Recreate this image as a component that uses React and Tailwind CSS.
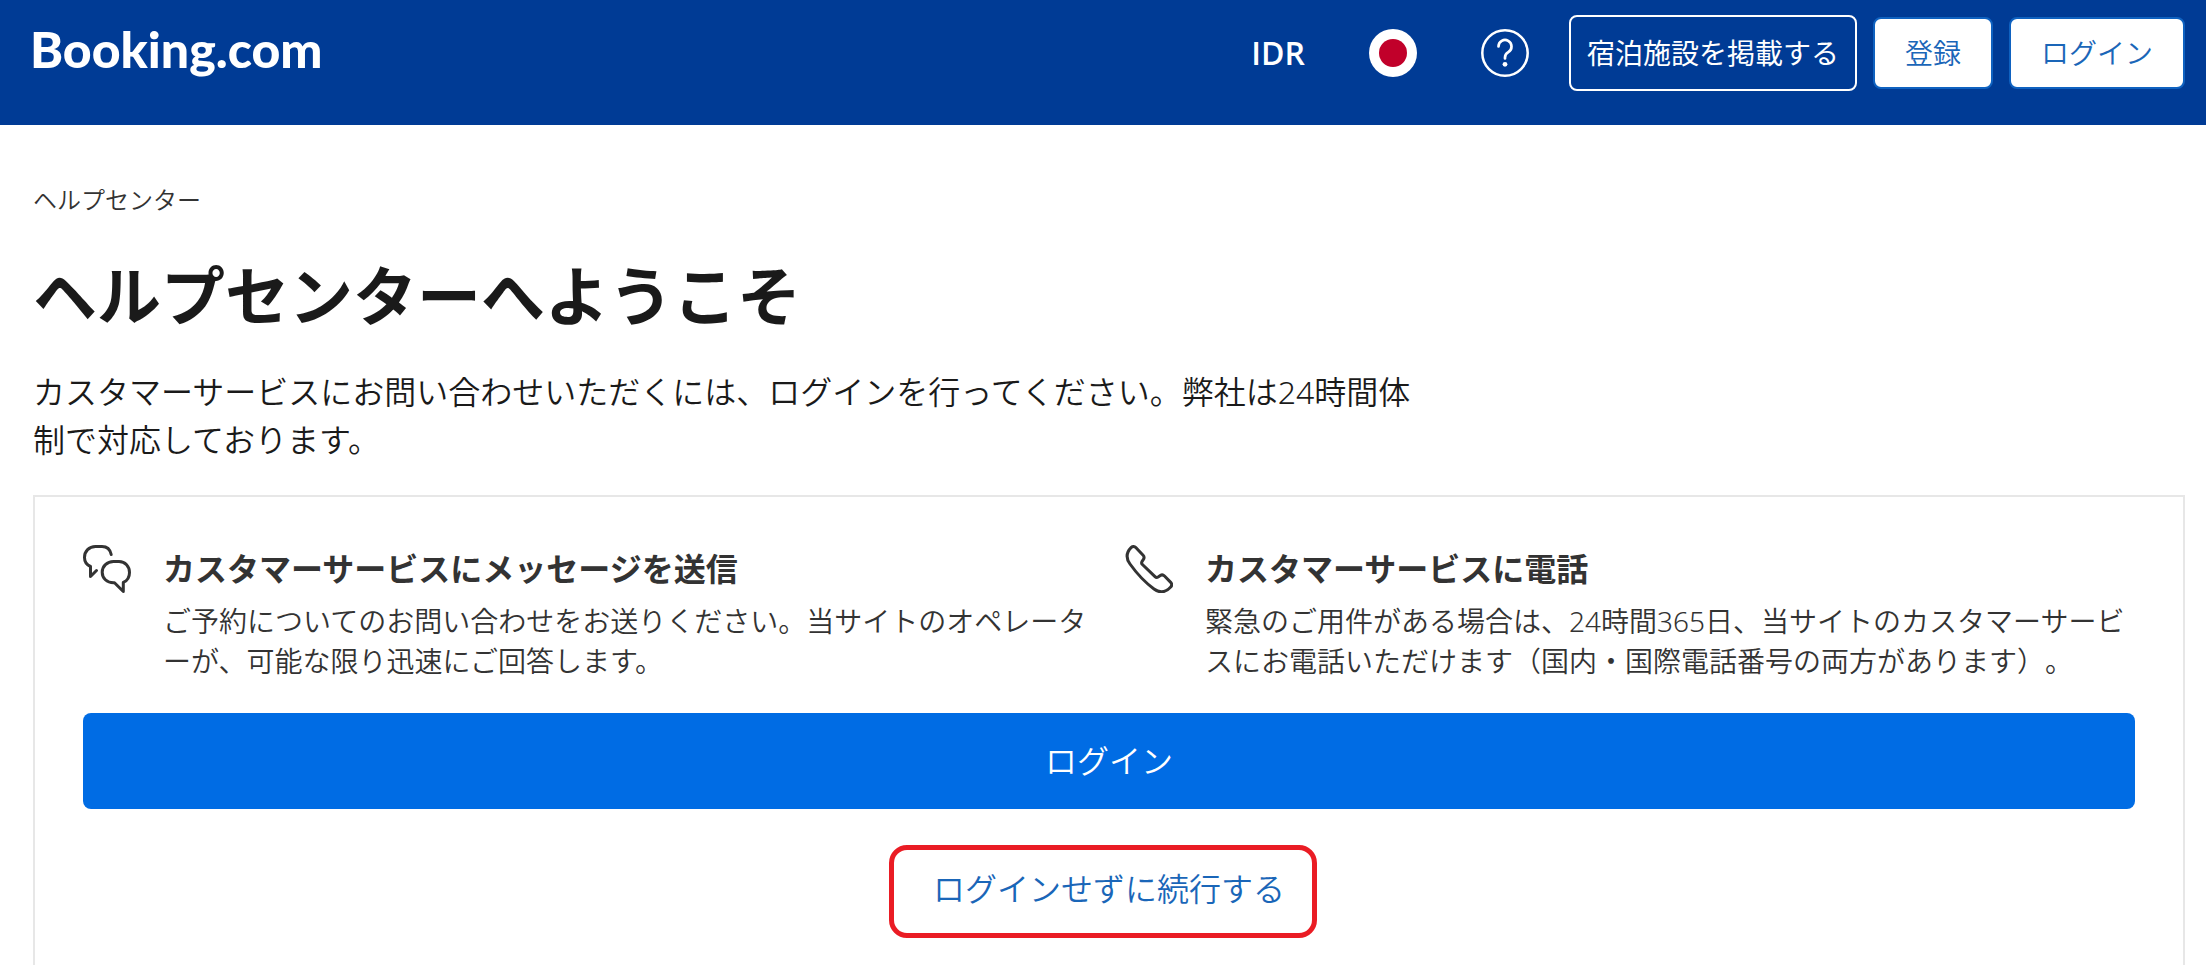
import React from 'react';

const contactOptions = [
    {
        id: 'message',
        icon: <ChatIcon />,
        title: 'カスタマーサービスにメッセージを送信',
        text: 'ご予約についてのお問い合わせをお送りください。当サイトのオペレーターが、可能な限り迅速にご回答します。',
    },
    {
        id: 'phone',
        icon: <PhoneIcon />,
        title: 'カスタマーサービスに電話',
        text: '緊急のご用件がある場合は、24時間365日、当サイトのカスタマーサービスにお電話いただけます（国内・国際電話番号の両方があります）。',
    },
];

function ChatIcon() {
    return (
        <svg
            viewBox="0 0 48 48"
            className="size-12 shrink-0"
            fill="none"
            stroke="currentColor"
            strokeWidth="3"
            strokeLinecap="round"
            strokeLinejoin="round"
            aria-hidden="true"
        >
            <path d="M28.2 9.5C27.2 4.5 23.8 1.5 19 1.5h-6.5C6 1.5 1.5 6.3 1.5 12.5c0 4.2 2 7.300 6 9V31.500l6-6" />
            <path d="M30.500 16.500h5.500c6.200 0 10.500 4.900 10.500 11 0 4.400-2.100 8.200-6.200 9.900v9.100l-8.800-8.700h-1c-6.600 0-11.300-4.600-11.300-10.600s4.800-10.700 11.300-10.700z" />
        </svg>
    );
}

function PhoneIcon() {
    return (
        <svg
            viewBox="0 0 48 48"
            className="size-12 shrink-0"
            fill="none"
            stroke="currentColor"
            strokeWidth="3"
            strokeLinecap="round"
            strokeLinejoin="round"
            aria-hidden="true"
        >
            <path d="M6.300 2.400a3.200 3.200 0 0 1 4.500.2l7.300 7.600c1.200 1.300 1.200 2.800.3 4.200l-1.300 2c-.7 1.100-.6 2.200.3 3.100L30 31.600c.9.900 2 1.100 3.100.4l2.200-1.500c1.400-.9 3-.7 4.200.5l6.200 6.400c1.300 1.400 1.300 3.100 0 4.500-5 5.500-11 6.300-16.700 2.100C21.400 38.400 12.500 29.500 5 19 .7 13 1.200 7.500 6.300 2.400z" />
        </svg>
    );
}

function HelpIcon() {
    return (
        <svg viewBox="0 0 48 48" className="size-12" fill="none" stroke="currentColor" strokeLinecap="round" aria-hidden="true">
            <circle cx="24" cy="24" r="22.7" strokeWidth="2.5" />
            <path d="M17.500 17.500a6.500 6.500 0 1 1 9.800 5.600c-2.200 1.300-3.300 2.600-3.300 5.400v1" strokeWidth="2.7" />
            <circle cx="24" cy="35.3" r="2.4" fill="currentColor" stroke="none" />
        </svg>
    );
}

function JapanFlag() {
    return (
        <svg viewBox="0 0 48 48" className="size-12" aria-hidden="true">
            <circle cx="24" cy="24" r="24" fill="#ffffff" />
            <circle cx="24" cy="24" r="14" fill="#c1002a" />
        </svg>
    );
}

function Header() {
    return (
        <header className="flex h-[125px] items-start justify-between bg-[#003b95] pt-[15px] pr-[21px] pl-[30px] text-white">
            <a href="#" className="font-[Lato] text-[50px] leading-[68px] font-black">
                Booking.com
            </a>
            <nav className="flex items-center gap-4 text-[28px] leading-10">
                <div className="mr-6 flex items-center gap-16">
                    <button type="button" className="font-['Open_Sans'] text-[32px] font-semibold">
                        IDR
                    </button>
                    <button type="button" aria-label="日本語">
                        <JapanFlag />
                    </button>
                    <button type="button" aria-label="ヘルプ">
                        <HelpIcon />
                    </button>
                </div>
                <a href="#" className="rounded-lg border-2 border-white px-4 py-4 font-normal">
                    宿泊施設を掲載する
                </a>
                <button type="button" className="rounded-lg border-2 border-[#0f62c0] bg-white px-[30px] py-[14px] text-[#1a66b8]">
                    登録
                </button>
                <button type="button" className="rounded-lg border-2 border-[#0f62c0] bg-white px-[30px] py-[14px] text-[#1a66b8]">
                    ログイン
                </button>
            </nav>
        </header>
    );
}

function App() {
    return (
        <div
            lang="ja"
            className="min-h-screen bg-white font-['Noto_Sans','Noto_Sans_CJK_JP',sans-serif] font-[350] text-[#1a1a1a] [line-break:loose] [text-spacing-trim:space-all]"
        >
            <Header />

            <main className="pr-[21px] pl-[33px]">
                <nav className="pt-[55px] text-2xl leading-10 text-[#333333]">ヘルプセンター</nav>
                <h1 className="mt-8 text-[64px] leading-[88px] font-bold">ヘルプセンターへようこそ</h1>
                <p className="mt-7 max-w-[1400px] text-[32px] leading-[48px]">
                    カスタマーサービスにお問い合わせいただくには、ログインを行ってください。弊社は24時間体制で対応しております。
                </p>

                {/* Sign-in card */}
                <section className="mt-[31px] border-2 border-[#e7e7e7] p-12 text-[#333333]">
                    <div className="grid grid-cols-2 gap-8">
                        {contactOptions.map((option) => (
                            <div key={option.id} className="flex items-start gap-8">
                                {option.icon}
                                <div>
                                    <h2 className="mb-2 text-[32px] leading-[48px] font-bold">{option.title}</h2>
                                    <p className="text-[28px] leading-10">{option.text}</p>
                                </div>
                            </div>
                        ))}
                    </div>
                    <button type="button" className="mt-8 h-24 w-full rounded-lg bg-[#006ce4] text-[32px] text-white">
                        ログイン
                    </button>
                    <div className="mt-8 flex justify-center">
                        <a href="#" className="relative px-8 py-6 text-[32px] leading-[48px] text-[#1a66b8]">
                            ログインせずに続行する
                            {/* Highlight ring */}
                            <span className="pointer-events-none absolute top-1 right-0 -bottom-px -left-3 rounded-[18px] border-[5px] border-[#ea1c24]" />
                        </a>
                    </div>
                </section>
            </main>
        </div>
    );
}

export default App;
